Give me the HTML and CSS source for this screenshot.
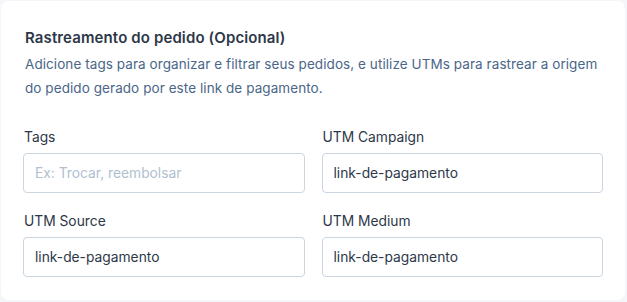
FILE: index.html
```html
<!DOCTYPE html>
<html lang="pt-BR">
<head>
<meta charset="utf-8">
<link rel="stylesheet" href="styles.css">
</head>
<body>
<section class="card">
  <h2 class="title">Rastreamento do pedido (Opcional)</h2>
  <p class="desc">Adicione tags para organizar e filtrar seus pedidos, e utilize UTMs para rastrear a origem do pedido gerado por este link de pagamento.</p>
  <div class="grid">
    <label class="field">
      <span class="label">Tags</span>
      <input class="input" type="text" placeholder="Ex: Trocar, reembolsar">
    </label>
    <label class="field">
      <span class="label">UTM Campaign</span>
      <input class="input" type="text" value="link-de-pagamento">
    </label>
    <label class="field">
      <span class="label">UTM Source</span>
      <input class="input" type="text" value="link-de-pagamento">
    </label>
    <label class="field">
      <span class="label">UTM Medium</span>
      <input class="input" type="text" value="link-de-pagamento">
    </label>
  </div>
</section>
</body>
</html>
```
FILE: styles.css
```css
* { box-sizing: border-box; }
html, body { margin: 0; padding: 0; }
body {
  background: #f4f6f9;
  font-family: Inter, "Noto Sans", sans-serif;
  padding: 1px 2px 2px 1px;
}
.card {
  background: #ffffff;
  border-radius: 8px;
  width: 624px;
  height: 299px;
  padding: 25px 22px 23px 22px;
}
.title {
  margin: 0 0 2px 2px;
  font-size: 15px;
  line-height: 24px;
  font-weight: 600;
  letter-spacing: 0.12px;
  color: #2d3748;
}
.desc {
  margin: 0 0 27px 2px;
  font-size: 13.5px;
  line-height: 24px;
  letter-spacing: 0.07px;
  color: #4a6688;
}
.grid {
  display: grid;
  grid-template-columns: 1fr 1fr;
  column-gap: 17px;
  row-gap: 18px;
}
.field {
  display: flex;
  flex-direction: column;
  gap: 6px;
}
.label {
  font-size: 13.8px;
  line-height: 20px;
  color: #2d3748;
  padding-left: 1px;
}
.input {
  height: 40px;
  border: 1px solid #cbd5e0;
  border-radius: 4px;
  padding: 0 11px;
  font-family: Inter, "Noto Sans", sans-serif;
  font-size: 13.8px;
  color: #2d3748;
  background: #fff;
  outline: none;
}
.input::placeholder { color: #b1bfd0; }
```
